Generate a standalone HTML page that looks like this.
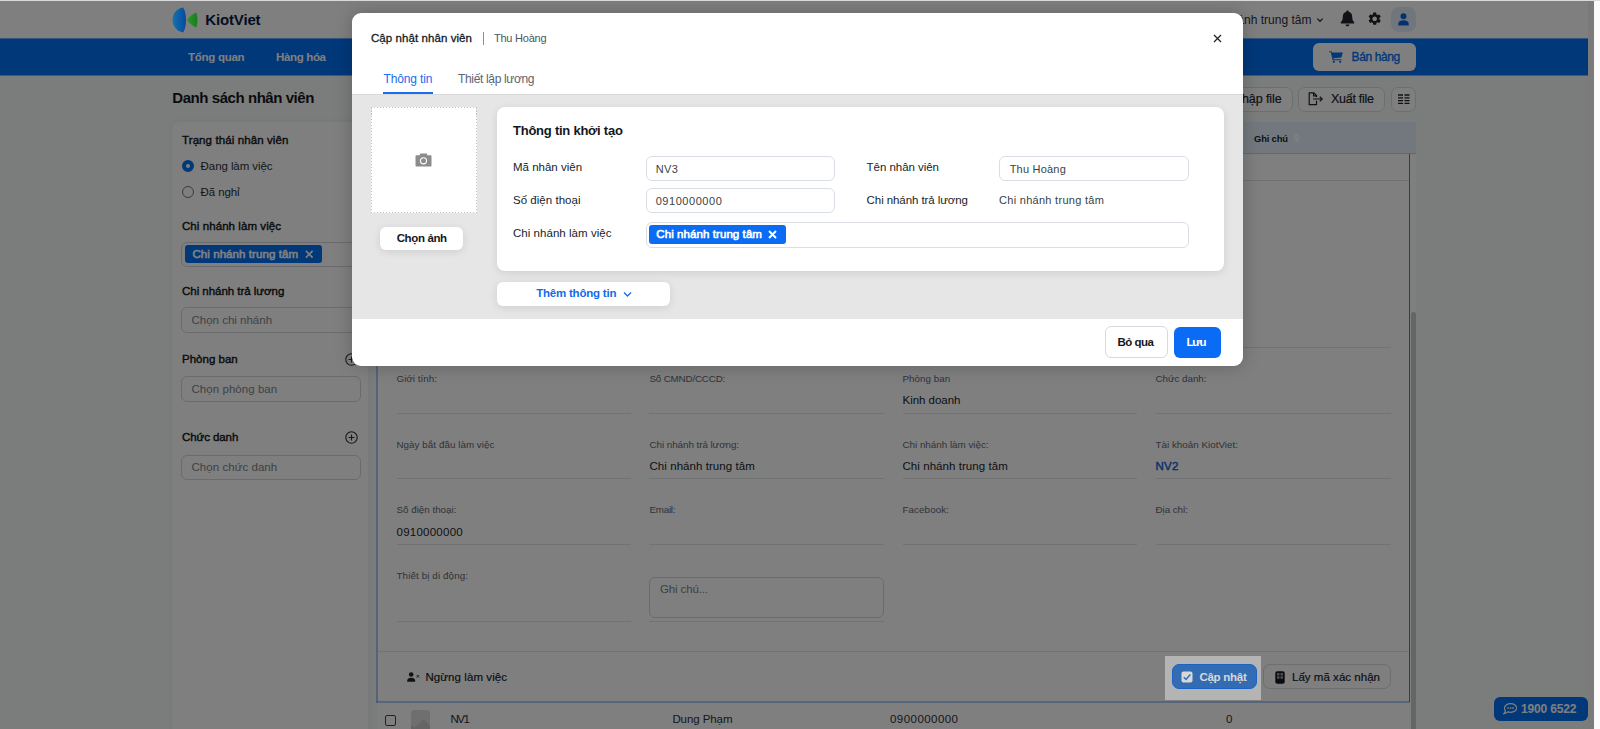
<!DOCTYPE html>
<html lang="vi">
<head>
<meta charset="utf-8">
<title>KiotViet - Danh sách nhân viên</title>
<style>
*{box-sizing:border-box;margin:0;padding:0}
html,body{width:1600px;height:729px;overflow:hidden;background:#fafafa}
body{font-family:"Liberation Sans",sans-serif;font-size:12px;color:#20242b;position:relative}
.abs{position:absolute}
.t{position:absolute;white-space:nowrap;line-height:1}
#page{position:absolute;left:0;top:0;width:1594px;height:729px;background:#f7f9f9;overflow:hidden}
#topline{position:absolute;left:0;top:0;width:1600px;height:1px;background:#d9d9d9;z-index:50}
#ov{position:absolute;left:0;top:0;width:1594px;height:729px;background:rgba(0,0,0,.5);z-index:10}
#modal{position:absolute;left:352px;top:13px;width:890.5px;height:352.5px;background:#fff;border-radius:9px;z-index:20;box-shadow:0 0 18px rgba(0,0,0,.22)}
#modal>.clip{position:absolute;left:0;top:0;width:100%;height:100%;border-radius:9px;overflow:hidden}
#logo{position:absolute;left:0;top:0;width:0;height:0;z-index:15}
#spot{position:absolute;left:1165px;top:656px;width:96px;height:44px;background:#b4b4b4;z-index:30}
.card{box-shadow:0 2px 8px rgba(0,0,0,.10)}
</style>
</head>
<body>
<div id="page">
<div class="abs" style="left:0px;top:0px;width:1588px;height:38px;background:#fff"></div>
<div class="t" style="left:205.2px;top:12px;font-size:15px;color:#0b1b45;font-weight:700;letter-spacing:-0.14px">KiotViet</div>
<div class="t" style="left:1202.6px;top:13.5px;font-size:12px;color:#2b2f36;letter-spacing:0.01px">Chi nhánh trung tâm</div>
<svg class="abs" style="left:1316px;top:16px" width="8" height="8" viewBox="0 0 8 8"><path d="M1.3 2.6 L4 5.3 L6.7 2.6" fill="none" stroke="#2b2f36" stroke-width="1.3"/></svg>
<svg class="abs" style="left:1340px;top:10px" width="15" height="17" viewBox="0 0 15 17"><path d="M7.5 0.6 C8.2 0.6 8.7 1.1 8.7 1.8 C11 2.4 12.2 4.3 12.2 6.8 C12.2 9.8 13 11 14.2 12.2 L14.2 13.4 L0.8 13.4 L0.8 12.2 C2 11 2.8 9.8 2.8 6.8 C2.8 4.3 4 2.4 6.3 1.8 C6.3 1.1 6.8 0.6 7.5 0.6 Z M5.6 14.4 L9.4 14.4 C9.4 15.5 8.6 16.3 7.5 16.3 C6.4 16.3 5.6 15.5 5.6 14.4 Z" fill="#20242b"/></svg>
<svg class="abs" style="left:1367.3px;top:11.3px" width="15.4" height="15.4" viewBox="0 0 24 24"><path fill="#20242b" d="M19.14 12.94c.04-.3.06-.61.06-.94 0-.32-.02-.64-.07-.94l2.03-1.58a.49.49 0 0 0 .12-.61l-1.92-3.32a.488.488 0 0 0-.59-.22l-2.39.96c-.5-.38-1.03-.7-1.62-.94l-.36-2.54a.484.484 0 0 0-.48-.41h-3.84c-.24 0-.43.17-.47.41l-.36 2.54c-.59.24-1.13.57-1.62.94l-2.39-.96c-.22-.08-.47 0-.59.22L2.74 8.87c-.12.21-.08.47.12.61l2.03 1.58c-.05.3-.09.63-.09.94s.02.64.07.94l-2.03 1.58a.49.49 0 0 0-.12.61l1.92 3.32c.12.22.37.29.59.22l2.39-.96c.5.38 1.03.7 1.62.94l.36 2.54c.05.24.24.41.48.41h3.84c.24 0 .44-.17.47-.41l.36-2.54c.59-.24 1.13-.56 1.62-.94l2.39.96c.22.08.47 0 .59-.22l1.92-3.32c.12-.22.07-.47-.12-.61l-2.01-1.58zM12 15.6c-1.98 0-3.6-1.62-3.6-3.6s1.62-3.6 3.6-3.6 3.6 1.62 3.6 3.6-1.62 3.6-3.6 3.6z"/></svg>
<div class="abs" style="left:1391px;top:7px;width:25px;height:25px;border-radius:8px;background:#e3ecfb"></div>
<svg class="abs" style="left:1398px;top:13px" width="11" height="13" viewBox="0 0 11 13"><circle cx="5.5" cy="3.2" r="3" fill="#0a62d8"/><path d="M0.3 12.6 L0.3 11 C0.3 8.6 2.2 7.3 5.5 7.3 C8.8 7.3 10.7 8.6 10.7 11 L10.7 12.6 Z" fill="#0a62d8"/></svg>
<div class="abs" style="left:0px;top:38px;width:1588px;height:38px;background:linear-gradient(180deg,#66a9f8 0 1px,#0070f4 1px 37px,#7cb5f7 37px 38px)"></div>
<div class="t" style="left:188.1px;top:51.85px;font-size:11.5px;color:#fff;font-weight:700;letter-spacing:-0.28px">Tổng quan</div>
<div class="t" style="left:276px;top:51.85px;font-size:11.5px;color:#fff;font-weight:700;letter-spacing:-0.34px">Hàng hóa</div>
<div class="abs" style="left:1313px;top:43px;width:103px;height:28px;border-radius:6px;background:#fff"></div>
<svg class="abs" style="left:1329px;top:51px" width="14" height="12" viewBox="0 0 14 12"><path d="M0.2 0.2 L2.6 0.2 L3 1.6 L13.8 1.6 L12.4 6.6 L4.3 7.3 L4.5 8.3 L12.3 8.3 L12.3 9.3 L3.6 9.3 L1.8 1.2 L0.2 1.2 Z" fill="#0070f4"/><circle cx="4.8" cy="10.8" r="1.1" fill="#0070f4"/><circle cx="11.2" cy="10.8" r="1.1" fill="#0070f4"/></svg>
<div class="t" style="left:1351.6px;top:51px;font-size:12px;color:#0070f4;letter-spacing:-0.4px;-webkit-text-stroke:0.35px #0070f4">Bán hàng</div>
<div class="t" style="left:172.3px;top:90.2px;font-size:15px;color:#14171c;font-weight:700;letter-spacing:-0.44px">Danh sách nhân viên</div>
<div class="abs" style="left:1206px;top:87px;width:86.5px;height:24.5px;border:1px solid #d9dce2;border-radius:7px;background:#fff"></div>
<div class="t" style="left:1233px;top:93.45px;font-size:12.5px;color:#20242b;letter-spacing:-0.09px;-webkit-text-stroke:0.2px #20242b">Nhập file</div>
<div class="abs" style="left:1298px;top:87px;width:87px;height:24.5px;border:1px solid #d9dce2;border-radius:7px;background:#fff"></div>
<svg class="abs" style="left:1308.2px;top:92px" width="16" height="14" viewBox="0 0 16 14"><path d="M8.5 8.8 L8.5 12.6 L1.2 12.6 L1.2 0.9 L5.8 0.9 L8.5 3.6 L8.5 5.2" fill="none" stroke="#20242b" stroke-width="1.2"/><path d="M5.6 0.9 L5.6 3.9 L8.5 3.9" fill="none" stroke="#20242b" stroke-width="1.2"/><path d="M5 7 L14.2 7 M11.8 4.6 L14.2 7 L11.8 9.4" fill="none" stroke="#20242b" stroke-width="1.2"/></svg>
<div class="t" style="left:1331px;top:93.45px;font-size:12.5px;color:#20242b;letter-spacing:-0.27px;-webkit-text-stroke:0.2px #20242b">Xuất file</div>
<div class="abs" style="left:1391.4px;top:87px;width:24.6px;height:24.5px;border:1px solid #d9dce2;border-radius:7px;background:#fff"></div>
<svg class="abs" style="left:1398px;top:94.3px" width="11.5" height="10.5" viewBox="0 0 11.5 10.5"><path d="M0 1 H5 M6.5 1 H11.5 M0 3.8 H5 M6.5 3.8 H11.5 M0 6.6 H5 M6.5 6.6 H11.5 M0 9.4 H5 M6.5 9.4 H11.5" stroke="#20242b" stroke-width="1.3"/></svg>
<div class="abs" style="left:172px;top:122px;width:196px;height:640px;background:#fff;border-radius:8px;box-shadow:0 0 8px rgba(0,0,0,.06)"></div>
<div class="t" style="left:182px;top:134.75px;font-size:11.5px;color:#14171c;letter-spacing:0.1px;-webkit-text-stroke:0.4px #14171c">Trạng thái nhân viên</div>
<div class="abs" style="left:181.5px;top:160px;width:12px;height:12px;border-radius:50%;border:4px solid #0070f4;background:#fff"></div>
<div class="t" style="left:200.6px;top:161.25px;font-size:11.5px;color:#2b2f36;letter-spacing:-0.08px">Đang làm việc</div>
<div class="abs" style="left:181.5px;top:186px;width:12px;height:12px;border-radius:50%;border:1px solid #6f7783;background:#fff"></div>
<div class="t" style="left:200.6px;top:187.25px;font-size:11.5px;color:#2b2f36;letter-spacing:-0.12px">Đã nghỉ</div>
<div class="t" style="left:182px;top:221.25px;font-size:11.5px;color:#14171c;letter-spacing:0.07px;-webkit-text-stroke:0.4px #14171c">Chi nhánh làm việc</div>
<div class="abs" style="left:181px;top:241.5px;width:180px;height:25px;border:1px solid #d3d7de;border-radius:6px;background:#fff"></div>
<div class="abs" style="left:184.5px;top:245px;width:137.5px;height:18px;border-radius:3px;background:#0070f4"></div>
<div class="t" style="left:192.4px;top:248.55px;font-size:11.5px;color:#fff;letter-spacing:0.08px;-webkit-text-stroke:0.6px #fff">Chi nhánh trung tâm</div>
<svg class="abs" style="left:304.5px;top:250px" width="8.5" height="8.5" viewBox="0 0 8.5 8.5"><path d="M0.9 0.9 L7.6 7.6 M7.6 0.9 L0.9 7.6" stroke="#fff" stroke-width="1.7"/></svg>
<div class="t" style="left:182px;top:286.25px;font-size:11.5px;color:#14171c;letter-spacing:-0.03px;-webkit-text-stroke:0.4px #14171c">Chi nhánh trả lương</div>
<div class="abs" style="left:181px;top:307px;width:180px;height:25.5px;border:1px solid #d3d7de;border-radius:6px;background:#fff"></div>
<div class="t" style="left:191.5px;top:315.25px;font-size:11.5px;color:#7d838d;letter-spacing:0px">Chọn chi nhánh</div>
<div class="t" style="left:182px;top:353.75px;font-size:11.5px;color:#14171c;letter-spacing:0.01px;-webkit-text-stroke:0.4px #14171c">Phòng ban</div>
<svg class="abs" style="left:345px;top:353px" width="13" height="13" viewBox="0 0 13 13"><circle cx="6.5" cy="6.5" r="5.7" fill="none" stroke="#2b2f36" stroke-width="1.1"/><path d="M6.5 3.6 V9.4 M3.6 6.5 H9.4" stroke="#2b2f36" stroke-width="1.1"/></svg>
<div class="abs" style="left:181px;top:376px;width:180px;height:26px;border:1px solid #d3d7de;border-radius:6px;background:#fff"></div>
<div class="t" style="left:191.5px;top:383.75px;font-size:11.5px;color:#7d838d;letter-spacing:0.05px">Chọn phòng ban</div>
<div class="t" style="left:182px;top:431.75px;font-size:11.5px;color:#14171c;letter-spacing:-0.08px;-webkit-text-stroke:0.4px #14171c">Chức danh</div>
<svg class="abs" style="left:345px;top:431px" width="13" height="13" viewBox="0 0 13 13"><circle cx="6.5" cy="6.5" r="5.7" fill="none" stroke="#2b2f36" stroke-width="1.1"/><path d="M6.5 3.6 V9.4 M3.6 6.5 H9.4" stroke="#2b2f36" stroke-width="1.1"/></svg>
<div class="abs" style="left:181px;top:455px;width:180px;height:25px;border:1px solid #d3d7de;border-radius:6px;background:#fff"></div>
<div class="t" style="left:191.5px;top:461.75px;font-size:11.5px;color:#7d838d;letter-spacing:0.05px">Chọn chức danh</div>
<div class="abs" style="left:377px;top:122px;width:1039px;height:640px;background:#fff"></div>
<div class="abs" style="left:377px;top:122px;width:1039px;height:31.5px;background:#e7f1ff;border-bottom:1px solid #b8d3fa"></div>
<div class="t" style="left:1254px;top:133.8px;font-size:9.4px;color:#20242b;font-weight:700;letter-spacing:-0.16px">Ghi chú</div>
<svg class="abs" style="left:1293.2px;top:133px" width="7" height="9" viewBox="0 0 7 9"><path d="M3.5 0 L7 4 L0 4 Z M3.5 9 L7 5 L0 5 Z" fill="#fff"/></svg>
<div class="abs" style="left:376px;top:153px;width:2px;height:549px;background:rgba(59,128,240,.42)"></div>
<div class="abs" style="left:1409px;top:153.5px;width:1px;height:548px;background:#3b80f0"></div>
<div class="abs" style="left:376px;top:701px;width:1034px;height:2px;background:rgba(59,128,240,.4)"></div>
<div class="abs" style="left:378px;top:179.5px;width:1031px;height:1px;background:#dcdfe4"></div>
<div class="t" style="left:396.5px;top:308.1px;font-size:9.8px;color:#5f6672">Mã nhân viên:</div>
<div class="t" style="left:396.5px;top:329.25px;font-size:11.5px;color:#20242b">NV2</div>
<div class="t" style="left:649.5px;top:308.1px;font-size:9.8px;color:#5f6672">Tên nhân viên:</div>
<div class="t" style="left:649.5px;top:329.25px;font-size:11.5px;color:#20242b">Thu Hoàng</div>
<div class="t" style="left:902.5px;top:308.1px;font-size:9.8px;color:#5f6672">Mã chấm công:</div>
<div class="t" style="left:1155.5px;top:308.1px;font-size:9.8px;color:#5f6672">Ngày sinh:</div>
<div class="t" style="left:396.5px;top:374.1px;font-size:9.8px;color:#5f6672;letter-spacing:0.02px">Giới tính:</div>
<div class="t" style="left:649.5px;top:374.1px;font-size:9.8px;color:#5f6672;letter-spacing:-0.17px">Số CMND/CCCD:</div>
<div class="t" style="left:902.5px;top:374.1px;font-size:9.8px;color:#5f6672;letter-spacing:0.04px">Phòng ban</div>
<div class="t" style="left:1155.5px;top:374.1px;font-size:9.8px;color:#5f6672;letter-spacing:-0.03px">Chức danh:</div>
<div class="t" style="left:902.5px;top:394.75px;font-size:11.5px;color:#20242b;letter-spacing:-0.02px">Kinh doanh</div>
<div class="t" style="left:396.5px;top:439.9px;font-size:9.8px;color:#5f6672;letter-spacing:0.05px">Ngày bắt đầu làm việc</div>
<div class="t" style="left:649.5px;top:439.9px;font-size:9.8px;color:#5f6672;letter-spacing:-0.04px">Chi nhánh trả lương:</div>
<div class="t" style="left:902.5px;top:439.9px;font-size:9.8px;color:#5f6672">Chi nhánh làm việc:</div>
<div class="t" style="left:1155.5px;top:439.9px;font-size:9.8px;color:#5f6672;letter-spacing:0.02px">Tài khoản KiotViet:</div>
<div class="t" style="left:649.5px;top:461.25px;font-size:11.5px;color:#20242b;letter-spacing:0.06px">Chi nhánh trung tâm</div>
<div class="t" style="left:902.5px;top:461.25px;font-size:11.5px;color:#20242b;letter-spacing:0.06px">Chi nhánh trung tâm</div>
<div class="t" style="left:1155.5px;top:461.25px;font-size:11.5px;color:#0a62d8;letter-spacing:0.21px;-webkit-text-stroke:0.4px #0a62d8">NV2</div>
<div class="t" style="left:396.5px;top:505.1px;font-size:9.8px;color:#5f6672;letter-spacing:0px">Số điện thoại:</div>
<div class="t" style="left:649.5px;top:505.1px;font-size:9.8px;color:#5f6672;letter-spacing:-0.25px">Email:</div>
<div class="t" style="left:902.5px;top:505.1px;font-size:9.8px;color:#5f6672;letter-spacing:0.08px">Facebook:</div>
<div class="t" style="left:1155.5px;top:505.1px;font-size:9.8px;color:#5f6672;letter-spacing:-0.04px">Địa chỉ:</div>
<div class="t" style="left:396.5px;top:526.75px;font-size:11.5px;color:#20242b;letter-spacing:0.25px">0910000000</div>
<div class="t" style="left:396.5px;top:570.6px;font-size:9.8px;color:#5f6672;letter-spacing:0.11px">Thiết bị di động:</div>
<div class="abs" style="left:397px;top:346.5px;width:234px;height:1px;background:#e1e4e8"></div>
<div class="abs" style="left:649px;top:346.5px;width:235px;height:1px;background:#e1e4e8"></div>
<div class="abs" style="left:903px;top:346.5px;width:234px;height:1px;background:#e1e4e8"></div>
<div class="abs" style="left:1156px;top:346.5px;width:235px;height:1px;background:#e1e4e8"></div>
<div class="abs" style="left:397px;top:412.5px;width:234px;height:1px;background:#e1e4e8"></div>
<div class="abs" style="left:649px;top:412.5px;width:235px;height:1px;background:#e1e4e8"></div>
<div class="abs" style="left:903px;top:412.5px;width:234px;height:1px;background:#e1e4e8"></div>
<div class="abs" style="left:1156px;top:412.5px;width:235px;height:1px;background:#e1e4e8"></div>
<div class="abs" style="left:397px;top:478px;width:234px;height:1px;background:#e1e4e8"></div>
<div class="abs" style="left:649px;top:478px;width:235px;height:1px;background:#e1e4e8"></div>
<div class="abs" style="left:903px;top:478px;width:234px;height:1px;background:#e1e4e8"></div>
<div class="abs" style="left:1156px;top:478px;width:235px;height:1px;background:#e1e4e8"></div>
<div class="abs" style="left:397px;top:543.7px;width:234px;height:1px;background:#e1e4e8"></div>
<div class="abs" style="left:649px;top:543.7px;width:235px;height:1px;background:#e1e4e8"></div>
<div class="abs" style="left:903px;top:543.7px;width:234px;height:1px;background:#e1e4e8"></div>
<div class="abs" style="left:1156px;top:543.7px;width:235px;height:1px;background:#e1e4e8"></div>
<div class="abs" style="left:397px;top:620.5px;width:234px;height:1px;background:#e1e4e8"></div>
<div class="abs" style="left:649px;top:620.5px;width:235px;height:1px;background:#e1e4e8"></div>
<div class="abs" style="left:649px;top:577px;width:235px;height:41px;border:1px solid #d3d7de;border-radius:6px;background:#fff"></div>
<div class="t" style="left:660px;top:583.75px;font-size:11.5px;color:#7d838d;letter-spacing:-0.14px">Ghi chú...</div>
<div class="abs" style="left:378px;top:650.7px;width:1031px;height:1px;background:#e4e6ea"></div>
<svg class="abs" style="left:406.8px;top:671.8px" width="13" height="10.2" viewBox="0 0 14 11"><circle cx="4.5" cy="2.7" r="2.5" fill="#20242b"/><path d="M0.2 10.6 L0.2 9.3 C0.2 7.3 1.9 6.2 4.500 6.2 C7.1 6.2 8.8 7.3 8.8 9.3 L8.8 10.6 Z" fill="#20242b"/><path d="M10.4 3.4 L13 6 M13 3.4 L10.4 6" stroke="#20242b" stroke-width="1"/></svg>
<div class="t" style="left:425.5px;top:671.75px;font-size:11.5px;color:#20242b;letter-spacing:0.07px;-webkit-text-stroke:0.2px #20242b">Ngừng làm việc</div>
<div class="abs" style="left:1172px;top:664.5px;width:84px;height:24.5px;border-radius:6px;background:#0070f4"></div>
<div class="abs" style="left:1262.5px;top:664px;width:128px;height:25px;border:1px solid #d9dce2;border-radius:7px;background:#fff"></div>
<svg class="abs" style="left:1274.5px;top:670.5px" width="10" height="13" viewBox="0 0 10 13"><rect x="0.3" y="0.3" width="9.4" height="12.4" rx="2" fill="#14171c"/><rect x="2" y="2" width="2.5" height="2.5" fill="#9aa0a8"/><rect x="5.5" y="2" width="2.5" height="2.5" fill="#9aa0a8"/><rect x="2" y="5.3" width="2.5" height="2.5" fill="#9aa0a8"/><rect x="5.5" y="5.3" width="2.5" height="2.5" fill="#9aa0a8"/></svg>
<div class="t" style="left:1292px;top:671.55px;font-size:11.5px;color:#20242b;letter-spacing:0.03px;-webkit-text-stroke:0.2px #20242b">Lấy mã xác nhận</div>
<div class="abs" style="left:384.6px;top:714.7px;width:11.4px;height:11.4px;border:1px solid #3f4652;border-radius:2px;background:#fff"></div>
<div class="abs" style="left:411px;top:710px;width:19px;height:24px;border-radius:3px;background:#dedede;overflow:hidden"><div class="abs" style="left:5px;top:12px;width:15px;height:15px;background:#cbcbcb;transform:rotate(45deg)"></div><div class="abs" style="left:-4px;top:17px;width:10px;height:10px;background:#cbcbcb;transform:rotate(45deg)"></div></div>
<div class="t" style="left:450.5px;top:713.75px;font-size:11.5px;color:#2b2f36;letter-spacing:-1.44px">NV1</div>
<div class="t" style="left:672.4px;top:713.75px;font-size:11.5px;color:#2b2f36;letter-spacing:-0.08px">Dung Phạm</div>
<div class="t" style="left:890px;top:713.75px;font-size:11.5px;color:#2b2f36;letter-spacing:0.45px">0900000000</div>
<div class="t" style="left:1226px;top:713.75px;font-size:11.5px;color:#2b2f36">0</div>
<div class="abs" style="left:1493.5px;top:696.5px;width:94px;height:24.5px;border-radius:6px;background:#0070f4"></div>
<svg class="abs" style="left:1502.5px;top:703px" width="14.5" height="11.5" viewBox="0 0 14.5 11.5"><path d="M7.6 0.7 C11 0.7 13.7 2.6 13.7 5 C13.7 7.4 11 9.3 7.600 9.300 C6.600 9.300 5.700 9.150 4.900 8.850 C3.900 9.900 2.400 10.500 0.800 10.700 C1.800 9.900 2.300 8.900 2.400 7.900 C1.800 7.100 1.500 6.100 1.500 5 C1.500 2.600 4.200 0.700 7.600 0.700 Z" fill="none" stroke="#fff" stroke-width="1.200"/><rect x="4.400" y="4.300" width="1.600" height="1.500" fill="#fff"/><rect x="6.800" y="4.300" width="1.600" height="1.500" fill="#fff"/><rect x="9.200" y="4.300" width="1.600" height="1.500" fill="#fff"/></svg>
<div class="t" style="left:1521px;top:703.3px;font-size:12px;color:#fff;font-weight:700;letter-spacing:-0.17px">1900 6522</div>
<div class="abs" style="left:1411px;top:312px;width:5px;height:430px;border-radius:3px;background:#cbcbcb"></div>
<div class="abs" style="left:1588px;top:0px;width:6px;height:729px;background:#f5f5f5"></div>
</div>
<div id="ov"></div>
<div id="logo"><svg class="abs" style="left:172px;top:7px" width="27" height="26" viewBox="0 0 27 26"><defs><linearGradient id="lg1" x1="0" y1="0" x2="1" y2="0"><stop offset="0" stop-color="#1274ae"/><stop offset="1" stop-color="#0a489e"/></linearGradient><linearGradient id="lg2" x1="0" y1="0" x2="1" y2="0"><stop offset="0" stop-color="#279a2a"/><stop offset="1" stop-color="#1b7a22"/></linearGradient></defs><path d="M11.2 0.6 C4.5 1.6 0.6 7 0.6 13 C0.6 19 4.5 24.4 11.2 25.4 C13.4 21.5 14 17.5 14 13 C14 8.5 13.4 4.5 11.2 0.6 Z" fill="url(#lg1)"/><path d="M14.9 13 C17.5 9.5 20.5 7 24.4 5.6 C25.8 10.5 25.8 15.5 24.4 20.4 C20.5 19 17.5 16.5 14.9 13 Z" fill="url(#lg2)"/></svg></div>
<div id="spot">
<div class="abs" style="left:7px;top:8px;width:84.5px;height:25px;border-radius:7px;background:#346cb4;border:1px solid #1a64c4"></div>
<svg class="abs" style="left:16.3px;top:15px" width="12" height="12" viewBox="0 0 12 12"><rect x="0.5" y="0.5" width="11" height="11" rx="2" fill="#d8d8d8"/><path d="M2.8 6.2 L5 8.4 L9.3 3.6" fill="none" stroke="#2f6fc4" stroke-width="1.5"/></svg>
<div class="t" style="left:34.4px;top:15.55px;font-size:11.5px;color:#d8d8d8;font-weight:700;letter-spacing:-0.26px">Cập nhật</div>
</div>
<div id="modal"><div class="clip">
<div class="t" style="left:19px;top:19.55px;font-size:11.5px;color:#14171c;letter-spacing:0.07px;-webkit-text-stroke:0.28px #14171c">Cập nhật nhân viên</div>
<div class="abs" style="left:131px;top:18.5px;width:1px;height:13px;background:#8a9099"></div>
<div class="t" style="left:142px;top:20px;font-size:11px;color:#4b5563;letter-spacing:-0.24px">Thu Hoàng</div>
<svg class="abs" style="left:861px;top:21px" width="9" height="9" viewBox="0 0 9 9"><path d="M1 1 L8 8 M8 1 L1 8" stroke="#20242b" stroke-width="1.3"/></svg>
<div class="t" style="left:31.5px;top:59.5px;font-size:12px;color:#1a6cf0;letter-spacing:-0.13px">Thông tin</div>
<div class="t" style="left:106px;top:59.5px;font-size:12px;color:#5b6470;letter-spacing:-0.34px">Thiết lập lương</div>
<div class="abs" style="left:0px;top:81px;width:891px;height:225px;background:#e6e6e6;border-top:1px solid #d9d9d9"></div>
<div class="abs" style="left:31px;top:79px;width:50px;height:2px;background:#1a6cf0"></div>
<div class="abs" style="left:19px;top:94px;width:106px;height:106px;background:#fff"></div>
<div class="abs" style="left:19px;top:94px;width:106px;height:1px;background:repeating-linear-gradient(90deg,#bcbfc5 0 1.5px,transparent 1.5px 3px)"></div>
<div class="abs" style="left:19px;top:199px;width:106px;height:1px;background:repeating-linear-gradient(90deg,#bcbfc5 0 1.5px,transparent 1.5px 3px)"></div>
<div class="abs" style="left:19px;top:94px;width:1px;height:106px;background:repeating-linear-gradient(180deg,#bcbfc5 0 1.5px,transparent 1.5px 3px)"></div>
<div class="abs" style="left:124px;top:94px;width:1px;height:106px;background:repeating-linear-gradient(180deg,#bcbfc5 0 1.5px,transparent 1.5px 3px)"></div>
<svg class="abs" style="left:63px;top:140px" width="17" height="14" viewBox="0 0 17 14"><path d="M5.5 0.5 L11.5 0.5 L12.5 2.2 L15.5 2.2 C16.1 2.2 16.5 2.6 16.5 3.2 L16.5 12.5 C16.5 13.1 16.1 13.5 15.5 13.5 L1.5 13.5 C0.9 13.5 0.5 13.1 0.5 12.5 L0.5 3.2 C0.5 2.6 0.9 2.2 1.5 2.2 L4.5 2.2 Z" fill="#8c8c8c"/><circle cx="8.5" cy="7.8" r="3.6" fill="#fff"/><circle cx="8.5" cy="7.8" r="2.5" fill="#8c8c8c"/></svg>
<div class="abs card" style="left:28px;top:214px;width:82.5px;height:23px;border-radius:6px;background:#fff"></div>
<div class="t" style="left:44.7px;top:219.95px;font-size:11.5px;color:#14171c;font-weight:700;letter-spacing:-0.37px">Chọn ảnh</div>
<div class="abs card" style="left:145px;top:94px;width:727px;height:164px;border-radius:8px;background:#fff"></div>
<div class="t" style="left:161px;top:110.5px;font-size:13px;color:#14171c;font-weight:700;letter-spacing:-0.24px">Thông tin khởi tạo</div>
<div class="t" style="left:161px;top:149.25px;font-size:11.5px;color:#20242b;letter-spacing:0px">Mã nhân viên</div>
<div class="t" style="left:161px;top:182.25px;font-size:11.5px;color:#20242b;letter-spacing:0.03px">Số điện thoại</div>
<div class="t" style="left:161px;top:214.95px;font-size:11.5px;color:#20242b;letter-spacing:0.04px">Chi nhánh làm việc</div>
<div class="abs" style="left:293.5px;top:143px;width:189.5px;height:25px;border:1px solid #dadde3;border-radius:6px;background:#fff"></div>
<div class="abs" style="left:293.5px;top:175px;width:189.5px;height:25px;border:1px solid #dadde3;border-radius:6px;background:#fff"></div>
<div class="abs" style="left:293.5px;top:208.5px;width:543.5px;height:26px;border:1px solid #dadde3;border-radius:6px;background:#fff"></div>
<div class="t" style="left:303.7px;top:150.5px;font-size:11px;color:#3a3f47;letter-spacing:0.35px">NV3</div>
<div class="t" style="left:303.7px;top:183px;font-size:11px;color:#3a3f47;letter-spacing:0.55px">0910000000</div>
<div class="abs" style="left:297px;top:212px;width:137px;height:19px;border-radius:3px;background:#0a6cf5"></div>
<div class="t" style="left:304.3px;top:215.95px;font-size:11.5px;color:#fff;letter-spacing:0.08px;-webkit-text-stroke:0.6px #fff">Chi nhánh trung tâm</div>
<svg class="abs" style="left:416px;top:217px" width="9" height="9" viewBox="0 0 9 9"><path d="M1 1 L8 8 M8 1 L1 8" stroke="#fff" stroke-width="1.9"/></svg>
<div class="t" style="left:514.6px;top:149.25px;font-size:11.5px;color:#20242b;letter-spacing:-0.04px">Tên nhân viên</div>
<div class="t" style="left:514.6px;top:182.25px;font-size:11.5px;color:#20242b;letter-spacing:-0.08px">Chi nhánh trả lương</div>
<div class="abs" style="left:647px;top:143px;width:190px;height:25px;border:1px solid #dadde3;border-radius:6px;background:#fff"></div>
<div class="t" style="left:657.7px;top:150.5px;font-size:11px;color:#3a3f47;letter-spacing:0.21px">Thu Hoàng</div>
<div class="t" style="left:647px;top:182px;font-size:11px;color:#3a3f47;letter-spacing:0.29px">Chi nhánh trung tâm</div>
<div class="abs card" style="left:145px;top:269px;width:173px;height:24px;border-radius:6px;background:#fff"></div>
<div class="t" style="left:184.2px;top:275.25px;font-size:11.5px;color:#126bec;font-weight:700;letter-spacing:-0.21px">Thêm thông tin</div>
<svg class="abs" style="left:271px;top:277.5px" width="9" height="7" viewBox="0 0 9 7"><path d="M1 1.5 L4.5 5 L8 1.5" fill="none" stroke="#126bec" stroke-width="1.3"/></svg>
<div class="abs" style="left:752.5px;top:313px;width:63px;height:32px;border:1px solid #d5d9e0;border-radius:6px;background:#fff"></div>
<div class="t" style="left:765.5px;top:324.45px;font-size:11.5px;color:#14171c;font-weight:700;letter-spacing:-0.49px">Bỏ qua</div>
<div class="abs" style="left:822px;top:313.5px;width:46.5px;height:31.5px;border-radius:6px;background:#0a6cf5"></div>
<div class="t" style="left:834.5px;top:324.45px;font-size:11.5px;color:#fff;font-weight:700;letter-spacing:-1.19px">Lưu</div>
</div></div>
<div id="topline"></div>
</body>
</html>
